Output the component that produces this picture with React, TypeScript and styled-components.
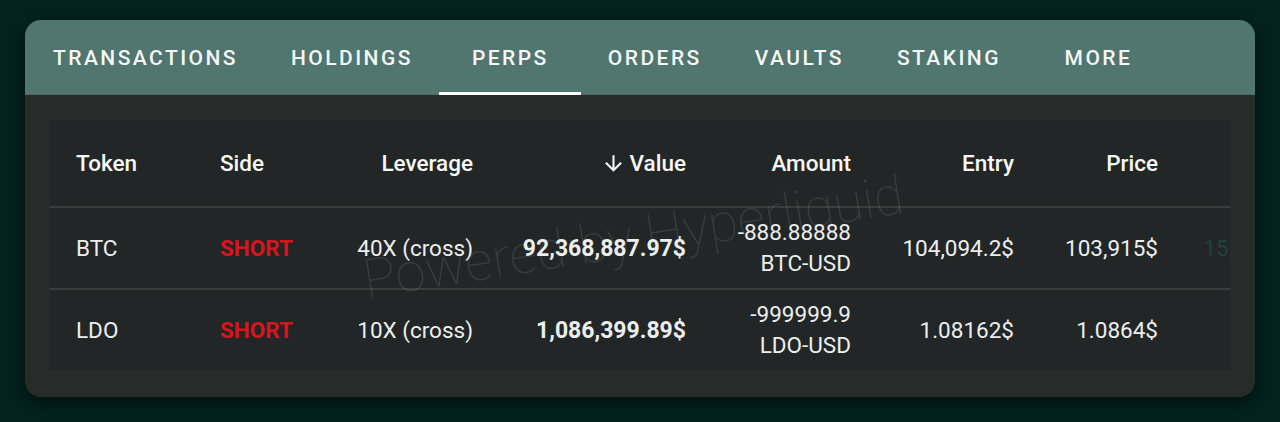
import React from "react";
import styled, { createGlobalStyle } from "styled-components";

const GlobalStyle = createGlobalStyle`
  html, body {
    margin: 0;
    padding: 0;
    background: #03211d;
  }
  body {
    font-family: Roboto, "Liberation Sans", Arial, sans-serif;
    -webkit-font-smoothing: antialiased;
  }
`;

const tabs = ["Transactions", "Holdings", "Perps", "Orders", "Vaults", "Staking", "More"];

type Position = {
  token: string;
  leverage: string;
  value: string;
  amount: string;
  pair: string;
  entry: string;
  price: string;
  pnl: string;
};

const positions: Position[] = [
  {
    token: "BTC",
    leverage: "40X (cross)",
    value: "92,368,887.97$",
    amount: "-888.88888",
    pair: "BTC-USD",
    entry: "104,094.2$",
    price: "103,915$",
    pnl: "15,921.50$",
  },
  {
    token: "LDO",
    leverage: "10X (cross)",
    value: "1,086,399.89$",
    amount: "-999999.9",
    pair: "LDO-USD",
    entry: "1.08162$",
    price: "1.0864$",
    pnl: "819.06$",
  },
];

export default function App() {
  return (
    <>
      <GlobalStyle />
      <Page>
        <Card>
          <TabBar>
            {tabs.map((t) => (
              <Tab key={t} $active={t === "Perps"}>
                {t}
              </Tab>
            ))}
          </TabBar>
          <Body>
            <TablePanel>
              <HeadRow>
                <HeadCell>Token</HeadCell>
                <HeadCell>Side</HeadCell>
                <HeadCell $right>Leverage</HeadCell>
                <HeadCell $right>
                  <SortIcon viewBox="0 0 24 24">
                    <path d="M20 12l-1.41-1.41L13 16.17V4h-2v12.17l-5.58-5.59L4 12l8 8 8-8z" />
                  </SortIcon>
                  Value
                </HeadCell>
                <HeadCell $right>Amount</HeadCell>
                <HeadCell $right>Entry</HeadCell>
                <HeadCell $right>Price</HeadCell>
                <HeadCell $right $dim>PnL</HeadCell>
              </HeadRow>
              {positions.map((p, i) => (
                <BodyRow key={p.token} $last={i === positions.length - 1}>
                  <Cell>{p.token}</Cell>
                  <Cell>
                    <Side>SHORT</Side>
                  </Cell>
                  <Cell $right>{p.leverage}</Cell>
                  <Cell $right $bold>
                    {p.value}
                  </Cell>
                  <Cell $right>
                    <Amount>
                      <span>{p.amount}</span>
                      <span>{p.pair}</span>
                    </Amount>
                  </Cell>
                  <Cell $right>{p.entry}</Cell>
                  <Cell $right>{p.price}</Cell>
                  <Cell $right $dim>
                    {p.pnl}
                  </Cell>
                </BodyRow>
              ))}
              <Watermark>Powered by Hyperliquid</Watermark>
            </TablePanel>
          </Body>
        </Card>
      </Page>
    </>
  );
}

const Page = styled.div`
  padding: 20px 25px 25px 25px;
`;

const Card = styled.div`
  width: 1230px;
  border-radius: 16px;
  overflow: hidden;
  background: #272c2b;
  box-shadow: 0 6px 14px rgba(0, 0, 0, 0.45);
`;

const TabBar = styled.div`
  height: 75px;
  background: #51756f;
  display: flex;
  padding-left: 1px;
  border-bottom: 1px solid #4a6a65;
  box-sizing: border-box;
`;

const Tab = styled.div<{ $active?: boolean }>`
  position: relative;
  min-width: 142px;
  box-sizing: border-box;
  padding: 2px 26px 0 27px;
  display: flex;
  align-items: center;
  justify-content: center;
  color: #f4f7f6;
  font-size: 21px;
  font-weight: 500;
  letter-spacing: 2.45px;
  text-transform: uppercase;

  &::after {
    content: "";
    display: ${(p) => (p.$active ? "block" : "none")};
    position: absolute;
    left: 0;
    right: 0;
    bottom: -1px;
    height: 3px;
    background: #ffffff;
  }
`;

const Body = styled.div`
  padding: 25px 25px 27px 25px;
`;

const TablePanel = styled.div`
  position: relative;
  height: 250px;
  background: #222626;
  overflow: hidden;
`;

const columns = "144px 136px 169px 213px 165px 163px 144px 157px";

const HeadRow = styled.div`
  display: grid;
  grid-template-columns: ${columns};
  height: 88px;
  border-bottom: 2px solid #393e3d;
  box-sizing: border-box;
`;

const BodyRow = styled.div<{ $last?: boolean }>`
  display: grid;
  grid-template-columns: ${columns};
  height: ${(p) => (p.$last ? "80px" : "82px")};
  border-bottom: ${(p) => (p.$last ? "none" : "2px solid #393e3d")};
  box-sizing: border-box;
`;

const Cell = styled.div<{ $right?: boolean; $bold?: boolean; $dim?: boolean }>`
  display: flex;
  align-items: center;
  justify-content: ${(p) => (p.$right ? "flex-end" : "flex-start")};
  padding: ${(p) => (p.$right ? "0 26px 0 0" : "0 0 0 26px")};
  font-size: ${(p) => (p.$bold ? "23px" : "22.5px")};
  font-weight: ${(p) => (p.$bold ? 700 : 400)};
  color: ${(p) => (p.$dim ? "#1f4239" : "#ebeeed")};
  white-space: nowrap;
`;

const HeadCell = styled(Cell)`
  font-weight: 500;
  color: ${(p) => (p.$dim ? "#1f4239" : "#f6f8f7")};
  gap: 4px;
`;

const SortIcon = styled.svg`
  width: 25px;
  height: 25px;
  fill: #f6f8f7;
`;

const Side = styled.span`
  color: #d9141c;
  font-weight: 700;
`;

const Amount = styled.div`
  display: flex;
  flex-direction: column;
  align-items: flex-end;
  line-height: 31px;
`;

const Watermark = styled.span`
  position: absolute;
  left: 318px;
  top: 133px;
  font-size: 54px;
  line-height: 1;
  font-weight: 100;
  color: rgba(255, 255, 255, 0.1);
  white-space: nowrap;
  transform: rotate(-9deg);
  transform-origin: 0 100%;
  pointer-events: none;
`;
